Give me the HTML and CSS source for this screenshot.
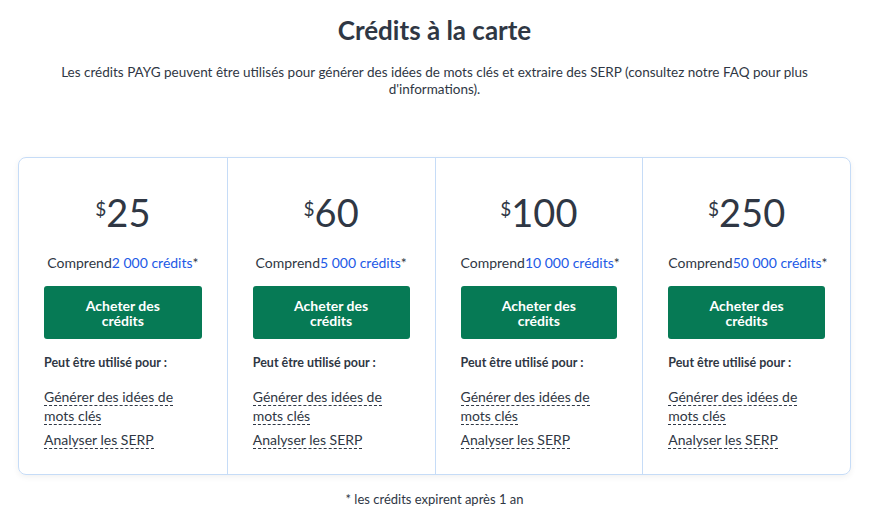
FILE: index.html
```html
<!DOCTYPE html>
<html lang="fr">
<head>
  <meta charset="UTF-8" />
  <meta name="viewport" content="width=device-width, initial-scale=1.0"/>
  <title>Crédits à la carte</title>
  <link rel="stylesheet" href="styles.css">
</head>
<body>

  <h1>Crédits à la carte</h1>
  <p class="intro">Les crédits PAYG peuvent être utilisés pour générer des idées de mots clés et extraire des SERP (consultez notre FAQ pour plus d'informations).</p>

  <div class="plans">
    <div class="plan">
      <div class="price"><span class="currency">$</span>25</div>
      <p class="includes">Comprend<span class="amount">2 000 crédits</span>*</p>
      <button>Acheter des crédits</button>
      <p class="usage-title">Peut être utilisé pour :</p>
      <ul class="usage">
        <li><span>Générer des idées de mots clés</span></li>
        <li><span>Analyser les SERP</span></li>
      </ul>
    </div>
    <div class="plan">
      <div class="price"><span class="currency">$</span>60</div>
      <p class="includes">Comprend<span class="amount">5 000 crédits</span>*</p>
      <button>Acheter des crédits</button>
      <p class="usage-title">Peut être utilisé pour :</p>
      <ul class="usage">
        <li><span>Générer des idées de mots clés</span></li>
        <li><span>Analyser les SERP</span></li>
      </ul>
    </div>
    <div class="plan">
      <div class="price"><span class="currency">$</span>100</div>
      <p class="includes">Comprend<span class="amount">10 000 crédits</span>*</p>
      <button>Acheter des crédits</button>
      <p class="usage-title">Peut être utilisé pour :</p>
      <ul class="usage">
        <li><span>Générer des idées de mots clés</span></li>
        <li><span>Analyser les SERP</span></li>
      </ul>
    </div>
    <div class="plan">
      <div class="price"><span class="currency">$</span>250</div>
      <p class="includes">Comprend<span class="amount">50 000 crédits</span>*</p>
      <button>Acheter des crédits</button>
      <p class="usage-title">Peut être utilisé pour :</p>
      <ul class="usage">
        <li><span>Générer des idées de mots clés</span></li>
        <li><span>Analyser les SERP</span></li>
      </ul>
    </div>
  </div>

  <p class="note">* les crédits expirent après 1 an</p>

</body>
</html>
```

FILE: styles.css
```css
body {
  font-family: 'Lato', sans-serif;
  margin: 0;
  padding: 0 25px 0 18px;
  background-color: #fff;
  color: #2f3744;
}

h1 {
  text-align: center;
  font-size: 26px;
  font-weight: 700;
  margin: 14px 0 0;
  line-height: 32px;
}

.intro {
  text-align: center;
  font-size: 13.5px;
  line-height: 17px;
  margin: 18px 10px 0;
}

.plans {
  display: grid;
  grid-template-columns: repeat(4, minmax(0, 1fr));
  margin-top: 59px;
  border: 1px solid #c6dcf7;
  border-radius: 8px;
  box-shadow: 0 2px 6px rgba(0, 0, 0, 0.06);
}

.plan {
  padding: 0 25px 20px;
  border-left: 1px solid #c6dcf7;
}

.plan:first-child {
  border-left: none;
}

.price {
  text-align: center;
  font-size: 38px;
  line-height: 40px;
  margin-top: 34px;
}

.currency {
  font-size: 19px;
  vertical-align: top;
  position: relative;
  top: -3px;
}

.includes {
  text-align: center;
  font-size: 14px;
  white-space: nowrap;
  margin: 21px 0 0;
  line-height: 20px;
}

.amount {
  color: #2259e6;
}

button {
  display: block;
  width: 100%;
  height: 53px;
  margin-top: 13px;
  border: none;
  border-radius: 3px;
  background-color: #067a55;
  color: #fff;
  font-family: inherit;
  font-size: 14px;
  font-weight: 700;
  line-height: 15px;
  padding: 0 30px;
}

.usage-title {
  font-size: 12.5px;
  font-weight: 700;
  margin: 16px 0 0;
}

.usage {
  list-style: none;
  margin: 17px 0 0;
  padding: 0;
  font-size: 14px;
  line-height: 19px;
}

.usage li {
  margin-bottom: 5px;
}

.usage span {
  border-bottom: 1px dashed #2f3744;
}

.note {
  text-align: center;
  font-size: 13px;
  margin: 16px 0 0;
}
```
